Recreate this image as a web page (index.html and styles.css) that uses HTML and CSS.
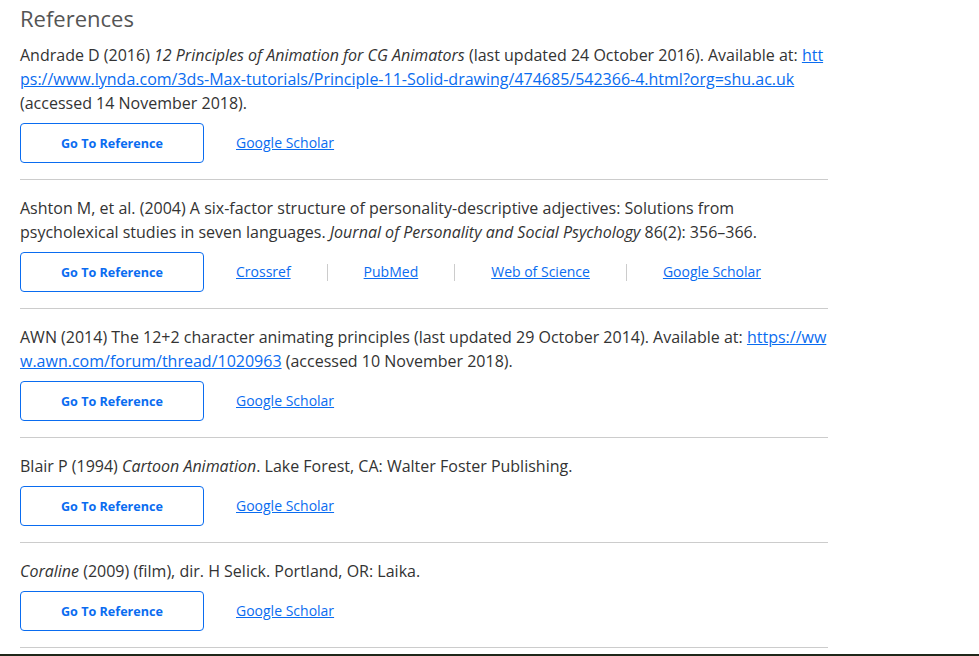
FILE: index.html
```html
<!DOCTYPE html>
<html lang="en">
<head>
<meta charset="utf-8">
<title>References</title>
<link rel="stylesheet" href="styles.css">
</head>
<body>
<main class="refs">
  <h2 class="refs-title">References</h2>
  <ul class="ref-list">
    <li class="ref">
      <p class="ref-text">Andrade D (2016) <em>12 Principles of Animation for CG Animators</em> (last updated 24 October 2016). Available at: <a class="url" href="#">https://www.lynda.com/3ds-Max-tutorials/Principle-11-Solid-drawing/474685/542366-4.html?org=shu.ac.uk</a> (accessed 14 November 2018).</p>
      <div class="ref-actions">
        <a class="btn" href="#">Go To Reference</a>
        <div class="links"><a href="#">Google Scholar</a></div>
      </div>
    </li>
    <li class="ref">
      <p class="ref-text">Ashton M, et al. (2004) A six-factor structure of personality-descriptive adjectives: Solutions from psycholexical studies in seven languages. <em>Journal of Personality and Social Psychology</em> 86(2): 356–366.</p>
      <div class="ref-actions">
        <a class="btn" href="#">Go To Reference</a>
        <div class="links">
          <a href="#">Crossref</a><span class="sep"></span>
          <a href="#">PubMed</a><span class="sep"></span>
          <a href="#">Web of Science</a><span class="sep"></span>
          <a href="#">Google Scholar</a>
        </div>
      </div>
    </li>
    <li class="ref">
      <p class="ref-text">AWN (2014) The 12+2 character animating principles (last updated 29 October 2014). Available at: <a class="url" href="#">https://www.awn.com/forum/thread/1020963</a> (accessed 10 November 2018).</p>
      <div class="ref-actions">
        <a class="btn" href="#">Go To Reference</a>
        <div class="links"><a href="#">Google Scholar</a></div>
      </div>
    </li>
    <li class="ref">
      <p class="ref-text">Blair P (1994) <em>Cartoon Animation</em>. Lake Forest, CA: Walter Foster Publishing.</p>
      <div class="ref-actions">
        <a class="btn" href="#">Go To Reference</a>
        <div class="links"><a href="#">Google Scholar</a></div>
      </div>
    </li>
    <li class="ref">
      <p class="ref-text"><em>Coraline</em> (2009) (film), dir. H Selick. Portland, OR: Laika.</p>
      <div class="ref-actions">
        <a class="btn" href="#">Go To Reference</a>
        <div class="links"><a href="#">Google Scholar</a></div>
      </div>
    </li>
  </ul>
</main>
<div class="footer-strip"></div>
</body>
</html>
```
FILE: styles.css
```css
html, body {
  margin: 0;
  padding: 0;
  background: #fff;
  overflow: hidden;
}
body {
  font-family: "Open Sans", "Noto Sans", sans-serif;
  color: #333;
}
.refs {
  width: 808px;
  padding: 0 0 0 20px;
}
.refs-title {
  margin: 0;
  padding-top: 3px;
  height: 40px;
  font-size: 22px;
  line-height: 30px;
  font-weight: 400;
  color: #555;
}
.ref-list {
  list-style: none;
  margin: 0;
  padding: 0;
}
.ref {
  padding: 16px 0 16px;
  border-bottom: 1px solid #ccc;
}
.ref:first-child {
  padding-top: 0;
}
.ref-text {
  margin: 0;
  font-size: 16px;
  line-height: 24px;
  color: #333;
}
.url {
  color: #0a6cf0;
  text-decoration: underline;
  word-break: break-all;
}
.ref-actions {
  display: flex;
  align-items: center;
  margin-top: 8px;
}
.btn {
  box-sizing: border-box;
  width: 184px;
  height: 40px;
  display: flex;
  align-items: center;
  justify-content: center;
  border: 1px solid #0a6cf0;
  border-radius: 4px;
  color: #0a6cf0;
  font-size: 12.6px;
  font-weight: 700;
  text-decoration: none;
}
.links {
  display: flex;
  align-items: center;
  margin-left: 32px;
}
.links a {
  color: #0a6cf0;
  font-size: 14px;
  line-height: 20px;
  text-decoration: underline;
}
.sep {
  display: inline-block;
  width: 1px;
  height: 17px;
  background: #ccc;
  margin: 0 36px;
}
.footer-strip {
  margin-top: 6px;
  height: 10px;
  background: #1f2719;
}
```
